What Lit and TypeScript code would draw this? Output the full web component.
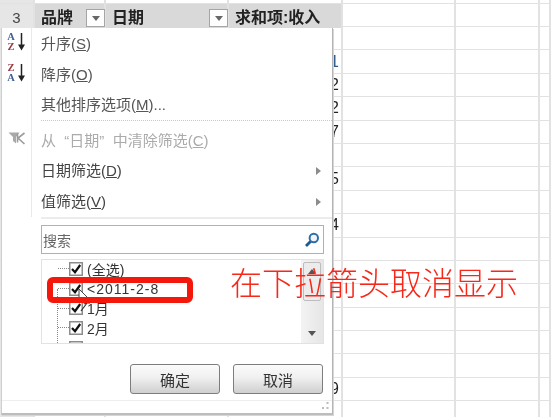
import { LitElement, html, css, svg } from "lit";
import { customElement } from "lit/decorators.js";

const digits: Record<number, string> = { 1: "1", 2: "2", 3: "2", 4: "7", 6: "5", 8: "4", 15: "9" };

const arrow = svg`<svg class="sort-arrow" width="9" height="18" viewBox="0 0 9 18"><path d="M4.5 0v13" stroke="#222" stroke-width="1.5" fill="none"/><path d="M1 11.5h7L4.5 17.5z" fill="#222"/></svg>`;
const check = svg`<svg class="cb" width="14" height="14" viewBox="0 0 14 14"><rect x="0.75" y="0.75" width="12.5" height="12.5" fill="#fff" stroke="#8c8c8c" stroke-width="1.5"/><path d="M3 7l3 3.2L11.2 3" fill="none" stroke="#111" stroke-width="2.2"/></svg>`;

@customElement("app-root")
export class AppRoot extends LitElement {
  static styles = css`
    :host { display: block; width: 551px; height: 417px; overflow: hidden; background: #fff; font-family: "Liberation Sans", "Noto Sans CJK SC", sans-serif; }
    .page { position: relative; width: 551px; height: 417px; overflow: hidden; filter: blur(0.35px); }
    .row { display: grid; grid-template-columns: 35px 71px 123px 114px 113px 84px 11px; height: 23.4px; box-sizing: border-box; border-bottom: 1.5px solid #e2e2e2; }
    .row.top { height: 4px; }
    .row.head { height: 23px; }
    .row > div { box-sizing: border-box; border-right: 2px solid #e2e2e2; display: flex; align-items: center; min-width: 0; }
    .row > div:first-child { background: #e6e6e6; justify-content: center; color: #444; font-size: 15px; }
    .row.head > div:first-child { padding-top: 3px; }
    .head > .h { background: #d9d9d9; font-weight: 700; font-size: 16px; color: #222; padding-left: 6px; justify-content: space-between; }
    .num { justify-content: flex-end; padding-right: 2px; font-size: 16px; color: #222; }
    .num.blue { color: #2c5a8c; }
    .drop { width: 19px; height: 18px; margin: 4px -1px 0 0; box-sizing: border-box; background: #fdfdfd; border: 1px solid #a5a5a5; display: flex; align-items: center; justify-content: center; }
    .tri { width: 0; height: 0; border-left: 4.5px solid transparent; border-right: 4.5px solid transparent; border-top: 5px solid #666; }

    .menu { position: absolute; left: 1px; top: 28px; width: 332px; height: 387px; box-sizing: border-box; background: #fff; border-left: 1px solid #cfcfcf; border-right: 1px solid #b4b4b4; border-bottom: 2px solid #bdbdbd; box-shadow: 1px 1px 0 #d6d6d6; display: flex; flex-direction: column; }
    .items { display: flex; flex-direction: column; height: 189px; }
    .item { display: flex; height: 31px; align-items: center; font-size: 15px; color: #555; }
    .item.dark { color: #444; }
    .item.off { color: #ababab; }
    .gut { width: 30px; height: 100%; flex: none; box-sizing: border-box; border-right: 1px solid #e9e9e9; display: flex; align-items: center; justify-content: center; gap: 2px; margin-right: 9px; padding-bottom: 3px; }
    .item .t { flex: 1; white-space: nowrap; padding-bottom: 2px; }
    .more { width: 0; height: 0; border-top: 4.5px solid transparent; border-bottom: 4.5px solid transparent; border-left: 5px solid #8c8c8c; margin-right: 11px; }
    .dotted { display: flex; height: 5px; }
    .dotted i { flex: 1; border-top: 1.5px dotted #c8c8c8; }
    .sort { display: flex; flex-direction: column; font: 700 10.5px/10px "Liberation Serif", serif; text-align: center; }
    .az-a { color: #3f5f95; }
    .az-z { color: #9a3a45; }
    .sep { height: 2px; margin-left: 39px; background: #ececec; flex: none; }
    .search { flex: none; margin: 6px 0 0 39px; width: 283px; height: 29px; box-sizing: border-box; border: 1.5px solid #b0b0b0; display: flex; align-items: center; justify-content: space-between; padding: 0 3px 0 1px; font-size: 14px; color: #666; }
    .list { flex: none; margin: 5px 0 0 39px; width: 283px; height: 85px; box-sizing: border-box; border: 1px solid #e2e2e2; display: flex; overflow: hidden; }
    .tree { flex: 1; margin-top: -1px; position: relative; }
    .trunk { position: absolute; left: 15px; top: 30px; bottom: 0; border-left: 1px dotted #888; }
    .node { height: 19.7px; display: flex; align-items: center; font-size: 14px; color: #333; padding-left: 16px; }
    .dash { width: 11px; border-top: 1px dotted #888; flex: none; }
    .cb { flex: none; margin-right: 4px; }
    .ls { letter-spacing: 1px; }
    .bar { width: 22px; background: linear-gradient(90deg, #f3f3f3, #e6e6e6); display: flex; flex-direction: column; align-items: center; box-sizing: border-box; padding-top: 2px; }
    .thumb { width: 18px; height: 39px; box-sizing: border-box; background: #ececec; border: 1px solid #bdbdbd; border-radius: 2px; display: flex; justify-content: center; padding-top: 6px; }
    .up { width: 0; height: 0; border-left: 4.5px solid transparent; border-right: 4.5px solid transparent; border-bottom: 5px solid #555; }
    .down { width: 0; height: 0; border-left: 4.5px solid transparent; border-right: 4.5px solid transparent; border-top: 5px solid #555; margin-top: 30px; }
    .btns { flex: none; display: flex; justify-content: flex-end; gap: 13px; margin-top: 20px; padding-right: 9px; }
    .btn { height: 30px; width: 90px; box-sizing: border-box; border: 1.5px solid #7d7d7d; border-radius: 3px; background: linear-gradient(180deg, #fbfbfb 0%, #f0f0f0 45%, #cfcfcf 100%); display: flex; align-items: center; justify-content: center; font-size: 15px; color: #333; }
    .foot { flex: 1; margin-top: 6px; border-top: 1.5px solid #eee; display: flex; justify-content: flex-end; align-items: flex-end; padding: 0 3px 3px 0; }

    .callout { position: absolute; left: 47px; top: 277px; width: 146px; height: 26px; box-sizing: border-box; border: 6px solid #f3170c; border-radius: 6px; }
    .cursor { position: absolute; left: 78px; top: 288px; }
    .note { position: absolute; left: 230px; top: 258px; font: 300 32px/46px "Noto Sans CJK SC", sans-serif; color: #f5281a; white-space: nowrap; }
  `;

  private renderRow(i: number) {
    const d = digits[i];
    return html`<div class="row">
      <div></div><div></div><div></div>
      <div class="num ${i === 1 ? "blue" : ""}">${d ?? ""}</div>
      <div></div><div></div><div></div>
    </div>`;
  }

  private node(label: unknown, cls = "") {
    return html`<div class="node"><span class="dash"></span>${check}<span class=${cls}>${label}</span></div>`;
  }

  render() {
    return html`<div class="page">
      <div class="row top"><div></div><div></div><div></div><div></div><div></div><div></div><div></div></div>
      <div class="row head">
        <div>3</div>
        <div class="h">品牌<span class="drop"><span class="tri"></span></span></div>
        <div class="h">日期<span class="drop"><span class="tri"></span></span></div>
        <div class="h">求和项:收入</div>
        <div></div><div></div><div></div>
      </div>
      ${Array.from({ length: 17 }, (_, i) => this.renderRow(i))}

      <div class="menu">
        <div class="items">
          <div class="item"><span class="gut"><span class="sort"><span class="az-a">A</span><span class="az-z">Z</span></span>${arrow}</span><span class="t">升序(<u>S</u>)</span></div>
          <div class="item"><span class="gut"><span class="sort"><span class="az-z">Z</span><span class="az-a">A</span></span>${arrow}</span><span class="t">降序(<u>O</u>)</span></div>
          <div class="item"><span class="gut"></span><span class="t">其他排序选项(<u>M</u>)...</span></div>
          <div class="dotted"><span class="gut"></span><i></i></div>
          <div class="item off"><span class="gut">
            <svg width="18" height="13" viewBox="0 0 18 13"><path d="M0.5 0.5h11L8 5v6.5L5 9V5z" fill="#a9a9a9"/><path d="M9.5 1.5v9M16.5 1L10 6l6.5 6" stroke="#9c9c9c" stroke-width="1.6" fill="none"/></svg>
          </span><span class="t">从&nbsp;&nbsp;“日期”&nbsp;&nbsp;中清除筛选(<u>C</u>)</span></div>
          <div class="item dark"><span class="gut"></span><span class="t">日期筛选(<u>D</u>)</span><span class="more"></span></div>
          <div class="item dark"><span class="gut"></span><span class="t">值筛选(<u>V</u>)</span><span class="more"></span></div>
        </div>
        <div class="sep"></div>
        <div class="search">搜索
          <svg width="16" height="16" viewBox="0 0 16 16"><circle cx="9.8" cy="6" r="4.2" fill="#eef5fb" stroke="#2f6ea5" stroke-width="2"/><path d="M6.5 9.5L2 14" stroke="#1f5a8f" stroke-width="2.8"/></svg>
        </div>
        <div class="list">
          <div class="tree">
            <span class="trunk"></span>
            ${this.node("(全选)")}
            ${this.node("<2011-2-8", "ls")}
            ${this.node("1月")}
            ${this.node("2月")}
            ${this.node("")}
          </div>
          <div class="bar">
            <div class="thumb"><span class="up"></span></div>
            <span class="down"></span>
          </div>
        </div>
        <div class="btns"><div class="btn">确定</div><div class="btn">取消</div></div>
        <div class="foot">
          <svg width="8" height="8" viewBox="0 0 8 8" fill="#bcbcbc"><rect x="5.5" y="0" width="2" height="2"/><rect x="1" y="5" width="2" height="2"/><rect x="5.5" y="5" width="2" height="2"/></svg>
        </div>
      </div>

      <svg class="cursor" width="14" height="28" viewBox="0 0 14 28"><path d="M1 1v13l3-3 2.5 5 2-1-2.5-5h4z" fill="#fff" stroke="#444" stroke-width="1"/><path d="M3 23l6-8h3" stroke="#333" stroke-width="1.2" fill="none"/></svg>
      <div class="callout"></div>
      <div class="note">在下拉箭头取消显示</div>
    </div>`;
  }
}
